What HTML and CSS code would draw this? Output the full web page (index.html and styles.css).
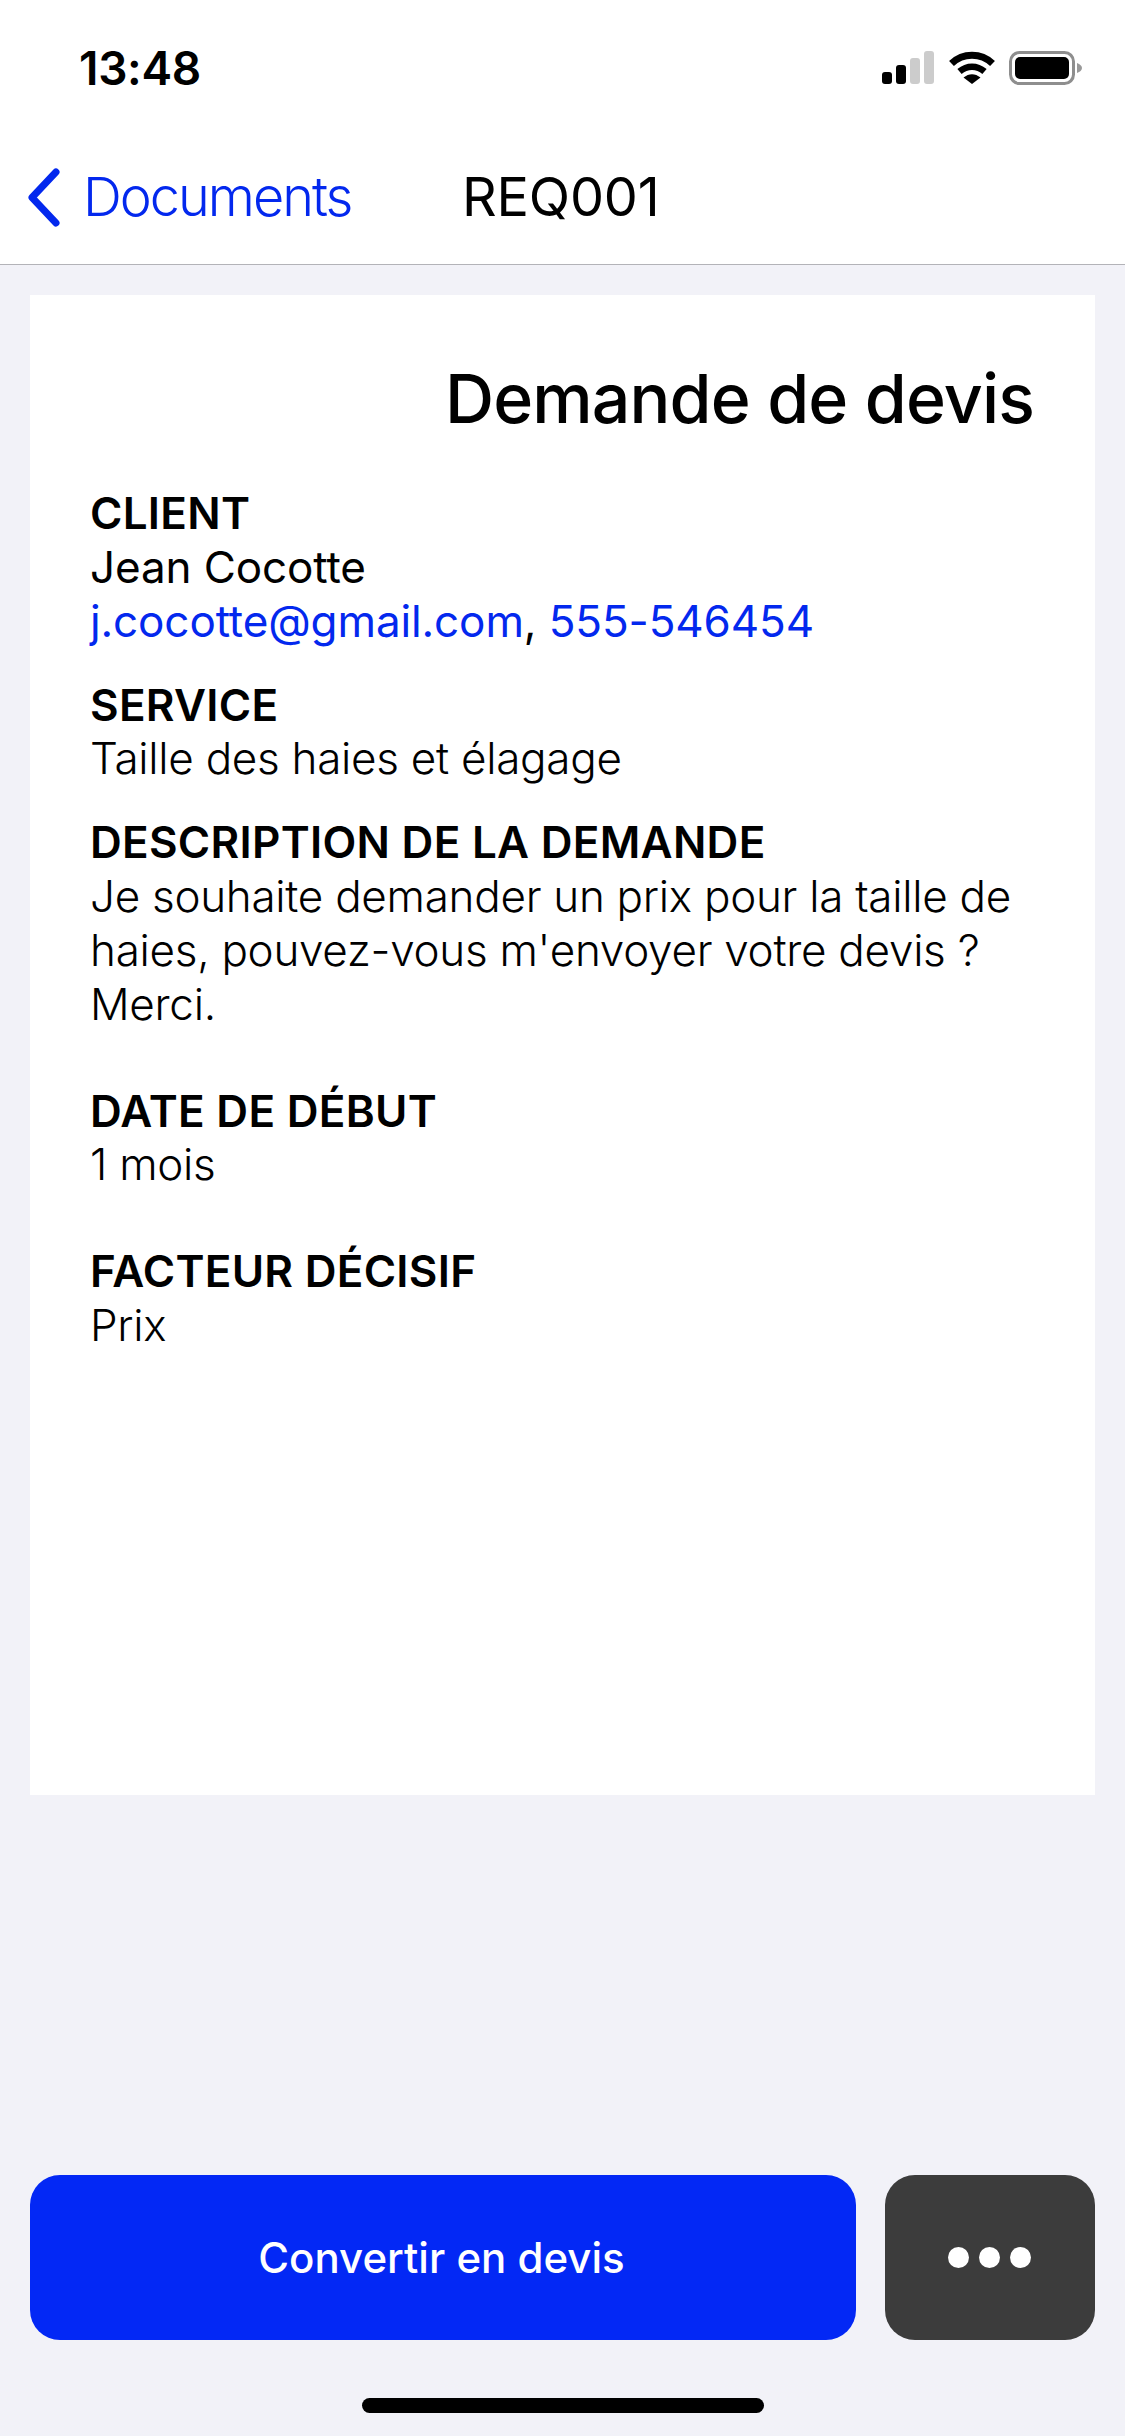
FILE: index.html
```html
<!DOCTYPE html>
<html lang="fr">
<head>
<meta charset="utf-8">
<title>REQ001</title>
<link rel="stylesheet" href="styles.css">
</head>
<body>
<div class="page">
  <header class="top">
    <div class="status">
      <span class="time">13:48</span>
      <div class="status-icons">
        <svg class="signal" width="53" height="34" viewBox="0 0 53 34"><rect x="0" y="21" width="10" height="12" rx="3" fill="#000"/><rect x="14" y="14" width="10" height="19" rx="3" fill="#000"/><rect x="28" y="7" width="10" height="26" rx="3" fill="#ccc"/><rect x="42" y="0" width="10" height="33" rx="3" fill="#ccc"/></svg>
        <svg class="wifi" width="46" height="34" viewBox="0 0 46 34"><path d="M2.5 12.5C14 1.5 32 1.5 43.5 12.5" fill="none" stroke="#000" stroke-width="7"/><path d="M10.5 20.5C18 14 28 14 35.5 20.5" fill="none" stroke="#000" stroke-width="6.5"/><path d="M23 33L14.5 26.5C20 22 26 22 31.5 26.5Z" fill="#000"/></svg>
        <svg class="battery" width="74" height="34" viewBox="0 0 74 34"><rect x="1.5" y="1.5" width="63" height="31" rx="9" fill="none" stroke="#8e8e8e" stroke-width="3"/><rect x="6" y="6" width="54" height="22" rx="5" fill="#000"/><path d="M68 12c3 1 5 3 5 5s-2 4-5 5z" fill="#999"/></svg>
      </div>
    </div>
    <nav class="nav">
      <a class="back">
        <svg width="36" height="60" viewBox="0 0 36 60"><path d="M31 4L7 29.5L31 55" fill="none" stroke="#0328ee" stroke-width="7" stroke-linecap="round" stroke-linejoin="round"/></svg>
        <span>Documents</span>
      </a>
      <span class="nav-title">REQ001</span>
    </nav>
  </header>

  <main class="card">
    <h1 class="title">Demande de devis</h1>
    <section class="block">
      <h2 class="label">CLIENT</h2>
      <p class="value regular">Jean Cocotte</p>
      <p class="value regular"><a class="link">j.cocotte@gmail.com</a>, <a class="link">555-546454</a></p>
    </section>
    <section class="block">
      <h2 class="label">SERVICE</h2>
      <p class="value">Taille des haies et élagage</p>
    </section>
    <section class="block">
      <h2 class="label">DESCRIPTION DE LA DEMANDE</h2>
      <p class="value">Je souhaite demander un prix pour la taille de<br>haies, pouvez-vous m'envoyer votre devis ?<br>Merci.</p>
    </section>
    <section class="block wide">
      <h2 class="label">DATE DE DÉBUT</h2>
      <p class="value">1 mois</p>
    </section>
    <section class="block wide">
      <h2 class="label">FACTEUR DÉCISIF</h2>
      <p class="value">Prix</p>
    </section>
  </main>

  <footer class="actions">
    <button class="btn primary">Convertir en devis</button>
    <button class="btn more" aria-label="Plus"><i></i><i></i><i></i></button>
  </footer>
  <div class="home-wrap"><div class="home"></div></div>
</div>
</body>
</html>
```
FILE: styles.css
```css
* { box-sizing: border-box; }
html, body { margin: 0; padding: 0; }
body { background: #f2f2f8; font-family: Inter, "Liberation Sans", sans-serif; color: #000; }
.page { width: 1125px; height: 2436px; display: flex; flex-direction: column; overflow: hidden; }

.top { background: #fff; border-bottom: 1.5px solid #b3b3b8; height: 265px; flex: none; }
.status { height: 132px; display: flex; align-items: center; justify-content: space-between; padding: 4px 42px 0 79px; }
.time { font-size: 46px; font-weight: 600; letter-spacing: -0.3px; }
.status-icons { display: flex; align-items: center; gap: 14px; }
.status-icons svg { display: block; }
.nav { height: 132px; display: flex; align-items: center; padding: 0 0 0 25px; position: relative; }
.back { display: flex; align-items: center; gap: 22px; color: #0328ee; font-size: 54px; line-height: 60px; font-weight: 300; letter-spacing: -2px; }
.back span { position: relative; top: -1px; }
.back svg { display: block; }
.nav-title { position: absolute; left: 462px; top: 0; line-height: 129px; font-size: 54px; font-weight: 400; letter-spacing: -0.2px; }

.card { background: #fff; margin: 30px 30px 0; height: 1500px; padding: 63px 60px 0; flex: none; }
.title { margin: 0 1px 49px 0; text-align: right; font-size: 68px; line-height: 80px; font-weight: 500; letter-spacing: -0.85px; }
.block { margin-top: 30px; }
.block.wide { margin-top: 53px; }
.block:first-of-type { margin-top: 0; }
.label { margin: 0; font-size: 44px; line-height: 53.85px; font-weight: 600; letter-spacing: 0.28px; }
.value { margin: 0; font-size: 44px; line-height: 53.85px; font-weight: 300; letter-spacing: -0.28px; }
.value.regular { font-weight: 400; letter-spacing: -0.12px; }
.link { color: #0328ee; }

.actions { margin-top: auto; padding: 0 30px; display: flex; gap: 29px; flex: none; }
.btn { height: 165px; border: 0; border-radius: 30px; color: #fff; font-family: inherit; padding: 0; }
.primary { flex: 1; background: #0328f5; font-size: 42px; font-weight: 500; padding-right: 3px; }
.more { width: 210px; background: #3c3c3c; display: flex; align-items: center; justify-content: center; gap: 10px; padding-right: 2px; }
.more i { width: 21px; height: 21px; border-radius: 50%; background: #fff; display: block; }
.home-wrap { height: 96px; display: flex; justify-content: center; padding-top: 58px; flex: none; }
.home { width: 402px; height: 15px; border-radius: 8px; background: #000; }
```
